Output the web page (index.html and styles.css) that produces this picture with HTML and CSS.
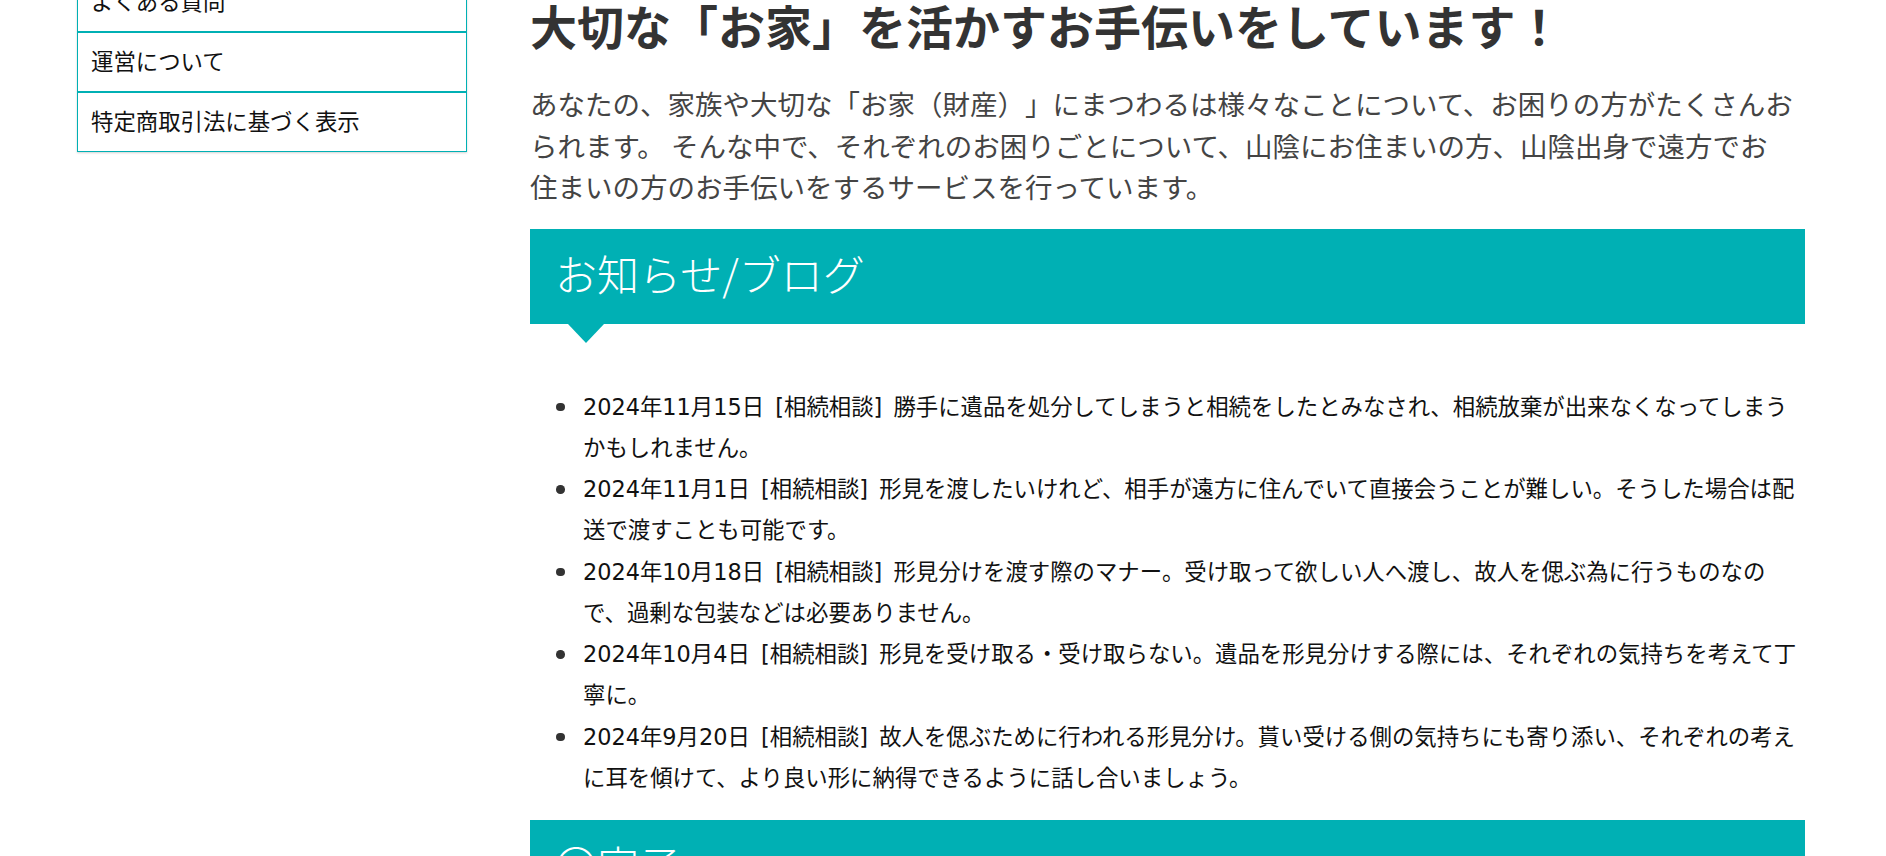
FILE: index.html
```html
<!DOCTYPE html>
<html lang="ja">
<head>
<meta charset="utf-8">
<title>大切な「お家」を活かすお手伝い</title>
<link rel="stylesheet" href="styles.css">
</head>
<body>
<div class="layout">
  <aside class="sidebar">
    <ul class="side-menu">
      <li><a href="#">よくある質問</a></li>
      <li><a href="#">運営について</a></li>
      <li><a href="#">特定商取引法に基づく表示</a></li>
    </ul>
  </aside>
  <main class="main">
    <h1 class="lead-title">大切な「お家」を活かすお手伝いをしています！</h1>
    <p class="lead-text">あなたの、家族や大切な「お家（財産）」にまつわるは様々なことについて、お困りの方がたくさんおられます。 そんな中で、それぞれのお困りごとについて、山陰にお住まいの方、山陰出身で遠方でお<br>住まいの方のお手伝いをするサービスを行っています。</p>

    <section class="block">
      <h2 class="block-title">お知らせ/ブログ</h2>
      <ul class="news">
        <li><span class="date">2024年11月15日</span> <span class="cat">[相続相談]</span> 勝手に遺品を処分してしまうと相続をしたとみなされ、相続放棄が出来なくなってしまうかもしれません。</li>
        <li><span class="date">2024年11月1日</span> <span class="cat">[相続相談]</span> 形見を渡したいけれど、相手が遠方に住んでいて直接会うことが難しい。そうした場合は配送で渡すことも可能です。</li>
        <li><span class="date">2024年10月18日</span> <span class="cat">[相続相談]</span> 形見分けを渡す際のマナー。受け取って欲しい人へ渡し、故人を偲ぶ為に行うものなので、過剰な包装などは必要ありません。</li>
        <li><span class="date">2024年10月4日</span> <span class="cat">[相続相談]</span> 形見を受け取る・受け取らない。遺品を形見分けする際には、それぞれの気持ちを考えて丁寧に。</li>
        <li><span class="date">2024年9月20日</span> <span class="cat">[相続相談]</span> 故人を偲ぶために行われる形見分け。貰い受ける側の気持ちにも寄り添い、それぞれの考えに耳を傾けて、より良い形に納得できるように話し合いましょう。</li>
      </ul>
    </section>

    <section class="block">
      <h2 class="block-title">〇家子</h2>
    </section>
  </main>
</div>
</body>
</html>
```

FILE: styles.css
```css
html, body {
  margin: 0;
  padding: 0;
  background: #ffffff;
  overflow: hidden;
}

body {
  font-family: "Noto Sans CJK JP", "Noto Sans", sans-serif;
  color: #222;
  text-spacing-trim: space-all;
}

.layout {
  display: flex;
  align-items: flex-start;
  gap: 63px;
  padding-left: 77px;
}

.sidebar {
  flex: none;
  width: 388px;
  margin-top: -28px;
  border: 1px solid #00b0b4;
  box-shadow: 0 1px 2px rgba(0, 0, 0, 0.18);
}

.side-menu {
  list-style: none;
  margin: 0;
  padding: 0;
}

.side-menu li {
  border-bottom: 2px solid #00b0b4;
}

.side-menu li:last-child {
  border-bottom: none;
}

.side-menu a {
  display: block;
  height: 55px;
  line-height: 55px;
  padding: 0 0 3px 13px;
  font-size: 22.4px;
  color: #111;
  text-decoration: none;
}

.main {
  flex: none;
  width: 1275px;
}

.lead-title {
  margin: 0;
  font-size: 47px;
  line-height: 50px;
  font-weight: 700;
  color: #333;
}

.lead-text {
  margin: 33px 0 0;
  font-size: 27.5px;
  line-height: 41.5px;
  color: #444;
}

.block {
  margin-top: 21px;
}

.block-title {
  position: relative;
  margin: 0;
  height: 87px;
  display: flex;
  align-items: center;
  padding: 0 0 8px 25px;
  background: #00b0b4;
  color: #fff;
  font-size: 42px;
  font-weight: 300;
}

.block-title::after {
  content: "";
  position: absolute;
  left: 38px;
  bottom: -19px;
  border-left: 18.5px solid transparent;
  border-right: 18.5px solid transparent;
  border-top: 19px solid #00b0b4;
}

.news {
  list-style: none;
  margin: 63px 0 0;
  padding-left: 53px;
  font-family: "DejaVu Sans", "Noto Sans CJK JP", sans-serif;
  font-size: 22.4px;
  line-height: 41.25px;
  color: #111;
}

.news li {
  position: relative;
}

.news li::before {
  content: "";
  position: absolute;
  left: -27px;
  top: 16.4px;
  width: 8.5px;
  height: 8.5px;
  border-radius: 50%;
  background: #333;
}

.news .cat {
  margin: 0 4px;
}
```
